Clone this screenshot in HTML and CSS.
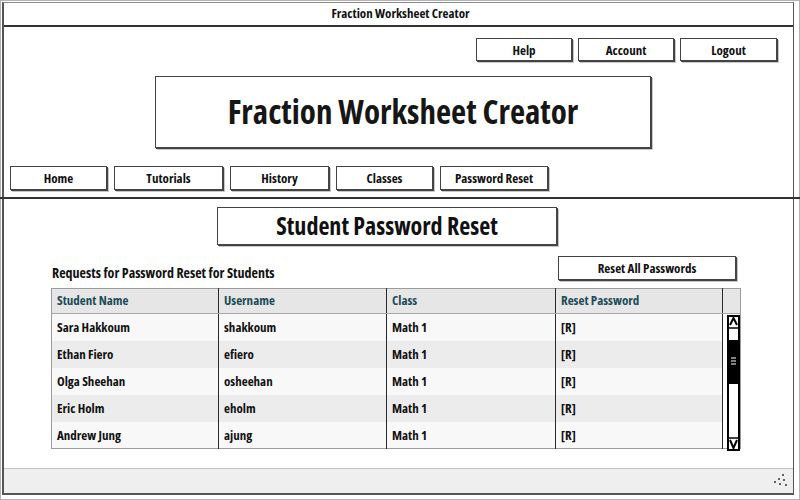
FILE: index.html
```html
<!DOCTYPE html>
<html lang="en">
<head>
<meta charset="utf-8">
<title>Fraction Worksheet Creator</title>
<link rel="stylesheet" href="styles.css">
</head>
<body>
<div class="window">
  <div class="frame">
    <div class="titlebar">Fraction Worksheet Creator</div>
    <div class="content">
      <div class="top-actions">
        <button class="btn btn-help">Help</button>
        <button class="btn btn-account">Account</button>
        <button class="btn btn-logout">Logout</button>
      </div>
      <div class="banner">Fraction Worksheet Creator</div>
      <nav class="nav">
        <button class="btn nav-home">Home</button>
        <button class="btn nav-tutorials">Tutorials</button>
        <button class="btn nav-history">History</button>
        <button class="btn nav-classes">Classes</button>
        <button class="btn nav-reset">Password Reset</button>
      </nav>
      <div class="subtitle">Student Password Reset</div>
      <div class="section-head">
        <span class="section-label">Requests for Password Reset for Students</span>
        <button class="btn btn-reset-all">Reset All Passwords</button>
      </div>
      <table class="grid">
        <colgroup>
          <col class="c-name"><col class="c-user"><col class="c-class"><col class="c-reset"><col class="c-scroll">
        </colgroup>
        <thead>
          <tr>
            <th>Student Name</th>
            <th>Username</th>
            <th>Class</th>
            <th>Reset Password</th>
            <th class="th-scroll"></th>
          </tr>
        </thead>
        <tbody>
          <tr class="odd">
            <td>Sara Hakkoum</td><td>shakkoum</td><td>Math 1</td><td>[R]</td>
            <td class="scroll-cell" rowspan="5">
              <svg class="scrollbar" width="18" height="130" viewBox="0 0 18 130">
                <rect x="4" y="2" width="11" height="134" fill="#fff" stroke="#000" stroke-width="2"/>
                <line x1="4" y1="14" x2="15" y2="14" stroke="#000" stroke-width="1.5"/>
                <path d="M6 11 L9.5 4 L13 11" fill="none" stroke="#000" stroke-width="2"/>
                <rect x="4" y="26" width="11" height="44" fill="#000"/>
                <line x1="7" y1="44" x2="12" y2="44" stroke="#fff" stroke-width="1"/>
                <line x1="7" y1="47" x2="12" y2="47" stroke="#fff" stroke-width="1"/>
                <line x1="7" y1="50" x2="12" y2="50" stroke="#fff" stroke-width="1"/>
                <line x1="4" y1="124" x2="15" y2="124" stroke="#000" stroke-width="1.5"/>
                <path d="M6 126 L9.5 134 L13 126" fill="none" stroke="#000" stroke-width="2"/>
              </svg>
            </td>
          </tr>
          <tr class="even"><td>Ethan Fiero</td><td>efiero</td><td>Math 1</td><td>[R]</td></tr>
          <tr class="odd"><td>Olga Sheehan</td><td>osheehan</td><td>Math 1</td><td>[R]</td></tr>
          <tr class="even"><td>Eric Holm</td><td>eholm</td><td>Math 1</td><td>[R]</td></tr>
          <tr class="odd"><td>Andrew Jung</td><td>ajung</td><td>Math 1</td><td>[R]</td></tr>
        </tbody>
      </table>
    </div>
    <div class="statusbar">
      <svg class="grip" width="16" height="16" viewBox="0 0 16 16">
        <circle cx="10" cy="2" r="1" fill="#333"/>
        <circle cx="6" cy="6" r="1" fill="#333"/>
        <circle cx="11" cy="7" r="1" fill="#333"/>
        <circle cx="2" cy="9" r="1" fill="#333"/>
        <circle cx="7" cy="11" r="1" fill="#333"/>
        <circle cx="13" cy="12" r="1" fill="#333"/>
      </svg>
    </div>
  </div>
</div>
</body>
</html>
```
FILE: styles.css
```css
* { box-sizing: border-box; }

html, body {
  margin: 0;
  padding: 0;
  width: 800px;
  height: 500px;
  overflow: hidden;
  background: #fff;
}

body {
  font-family: "Open Sans", "Roboto", sans-serif;
  font-stretch: 75%;
  font-weight: 700;
  color: #111;
}

.window {
  width: 800px;
  height: 500px;
  border: 1px solid #b4b4b4;
  padding: 1px 5px 4px 1px;
}

.frame {
  height: 100%;
  display: flex;
  flex-direction: column;
  border-left: 2px solid #555;
  border-top: 1px solid #8a8a8a;
  border-right: 1px solid #555;
  border-bottom: 2px solid #555;
}

.titlebar {
  height: 24px;
  border-bottom: 2px solid #333;
  text-align: center;
  font-size: 13px;
  line-height: 20px;
  padding-left: 4px;
}

.content {
  flex: 1;
  display: flex;
  flex-direction: column;
  align-items: flex-start;
}

.btn {
  font-family: inherit;
  font-stretch: inherit;
  font-weight: 700;
  font-size: 13px;
  color: #111;
  background: #fff;
  border: 1px solid #444;
  box-shadow: 1px 1px 0 #444, 2px 2px 0 #c8c8c8;
  padding: 0;
  margin: 0;
  height: 23px;
  line-height: 20px;
  cursor: pointer;
}

.top-actions {
  align-self: stretch;
  display: flex;
  justify-content: flex-end;
  gap: 6px;
  margin-top: 11px;
  padding-right: 16px;
}
.btn-help { width: 96px; }
.btn-account { width: 96px; }
.btn-logout { width: 97px; }

.banner {
  margin: 15px 0 0 151px;
  width: 496px;
  height: 72px;
  border: 1px solid #444;
  box-shadow: 1px 1px 0 #444, 2px 2px 0 #c8c8c8;
  display: flex;
  align-items: center;
  justify-content: center;
  font-size: 33px;
  color: #161616;
  padding-bottom: 2px;
}

.nav {
  align-self: stretch;
  display: flex;
  gap: 7px;
  margin: 18px -8px 0 -4px;
  padding: 0 0 7px 10px;
  border-bottom: 2px solid #333;
}
.nav .btn { height: 24px; font-size: 13px; }
.nav-home { width: 97px; }
.nav-tutorials { width: 109px; }
.nav-history { width: 99px; }
.nav-classes { width: 97px; }
.nav-reset { width: 108px; }

.subtitle {
  margin: 8px 0 0 213px;
  width: 340px;
  height: 38px;
  border: 1px solid #444;
  box-shadow: 1px 1px 0 #444, 2px 2px 0 #c8c8c8;
  display: flex;
  align-items: center;
  justify-content: center;
  font-size: 24px;
  padding-bottom: 2px;
}

.section-head {
  margin: 11px 0 0 48px;
  width: 684px;
  height: 24px;
  display: flex;
  justify-content: space-between;
  align-items: flex-end;
}
.section-label {
  font-size: 14px;
  line-height: 18px;
  margin-bottom: -2px;
}
.btn-reset-all {
  width: 178px;
  height: 24px;
  font-size: 13px;
}

.grid {
  margin: 8px 0 0 47px;
  width: 689px;
  border-collapse: collapse;
  table-layout: fixed;
  border: 1px solid #9c9c9c;
  font-size: 13px;
}
.c-name { width: 167px; }
.c-user { width: 168px; }
.c-class { width: 169px; }
.c-reset { width: 167px; }
.c-scroll { width: 18px; }

.grid th, .grid td {
  text-align: left;
  padding: 0 0 0 5px;
  white-space: nowrap;
  border-left: 1px solid #2a2a2a;
}
.grid th:first-child, .grid td:first-child { border-left: none; }

.grid th {
  height: 25px;
  background: #e6e6e6;
  color: #1c4b58;
  font-weight: 700;
  border-bottom: 1px solid #a8a8a8;
  padding-bottom: 2px;
}
.grid td { height: 27px; }
.grid tr.odd td { background: #f8f8f8; }
.grid tr.even td { background: #ececec; }

.grid td.scroll-cell {
  background: #fff !important;
  padding: 0;
  vertical-align: top;
  border-left: 1px solid #2a2a2a;
}
.scrollbar { display: block; margin-left: 1px; overflow: visible; }

.statusbar {
  height: 25px;
  background: #efefef;
  border-top: 1px solid #c2c2c2;
  display: flex;
  justify-content: flex-end;
  align-items: center;
  padding-right: 4px;
}
.grip { display: block; }
```
